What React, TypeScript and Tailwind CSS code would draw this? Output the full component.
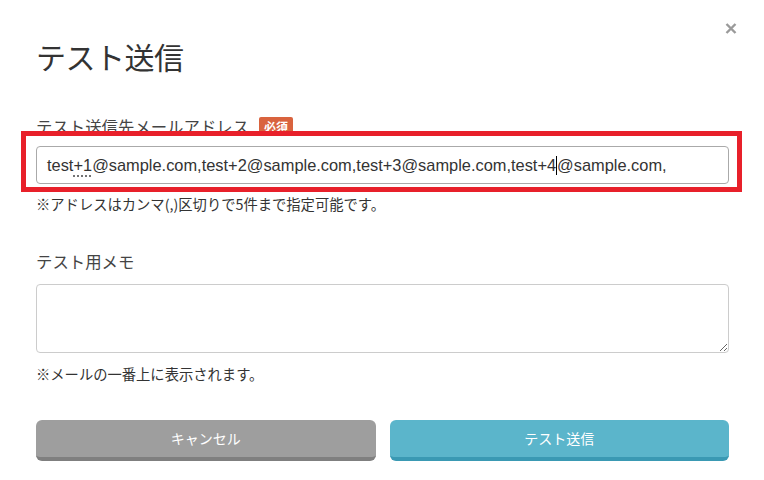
import React from "react";

const jp = "font-['Noto_Sans_CJK_JP','Noto_Sans',sans-serif]";

export default function App() {
  return (
    <div className={`relative w-[764px] h-[480px] bg-white text-[#333] ${jp}`}>
      {/* close */}
      <button className="absolute left-[724px] top-[22px] w-[14px] h-[13px] flex items-center justify-center">
        <svg width="12" height="11" viewBox="0 0 12 11">
          <path d="M1.5 1 L10.5 10 M10.5 1 L1.5 10" stroke="#9a9a9a" strokeWidth="2.4" strokeLinecap="butt" />
        </svg>
      </button>

      <div className="px-[36px] pt-[34px] pr-[35px]">
        <h1 className="text-[30px] leading-[44px] font-normal tracking-[-0.5px]">テスト送信</h1>

        {/* address */}
        <div className="mt-[37px] flex items-center gap-[10px] h-[22px]">
          <span className="text-[16.4px] leading-[22px] text-[#444]">テスト送信先メールアドレス</span>
          <span className="bg-[#d9633e] text-white text-[12px] leading-[19px] px-[5px] rounded-[2px] font-bold">必須</span>
        </div>
        <div className="relative mt-[9px]">
          <div className="h-[38px] border border-[#aaa] rounded-[4px] pl-[10px] flex items-center text-[16.4px] font-['Liberation_Sans',Arial,sans-serif] text-[#333] whitespace-nowrap overflow-hidden">
            <span>test</span>
            <span className="underline decoration-dotted decoration-[#555] underline-offset-[5px]">+1</span>
            <span>@sample.com,test+2@sample.com,test+3@sample.com,test+4</span>
            <span className="inline-block w-px h-[19px] bg-black" />
            <span>@sample.com,</span>
          </div>
          {/* annotation frame */}
          <div className="absolute left-[-15px] right-[-13px] top-[-15px] bottom-[-8px] border-[5px] border-[#e8202a]" />
        </div>
        <p className="mt-[10px] text-[14.3px] leading-[20px]">※アドレスはカンマ(,)区切りで5件まで指定可能です。</p>

        {/* memo */}
        <div className="mt-[36px] text-[16.4px] leading-[22px] text-[#444]">テスト用メモ</div>
        <textarea className="mt-[12px] block w-full h-[69px] border border-[#ccc] rounded-[4px] outline-none" />
        <p className="mt-[11px] text-[14.3px] leading-[20px]">※メールの一番上に表示されます。</p>

        {/* buttons */}
        <div className="mt-[36px] grid grid-cols-2 gap-[14px]">
          <button className="h-[41px] rounded-[6px] bg-[#9e9e9e] border-b-[4px] border-[#7f7f7f] text-white text-[14px]">
            キャンセル
          </button>
          <button className="h-[41px] rounded-[6px] bg-[#5bb5cb] border-b-[4px] border-[#3a99b3] text-white text-[14px]">
            テスト送信
          </button>
        </div>
      </div>
    </div>
  );
}
